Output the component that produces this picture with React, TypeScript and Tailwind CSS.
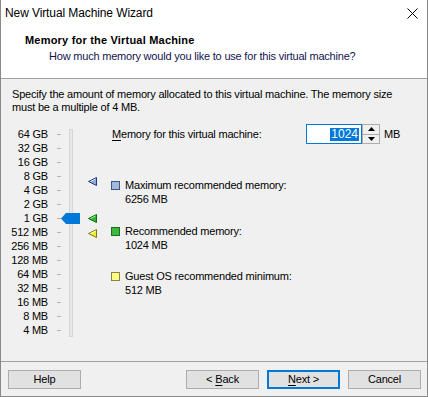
import React from "react";

const labels = [
  "64 GB", "32 GB", "16 GB", "8 GB", "4 GB", "2 GB", "1 GB",
  "512 MB", "256 MB", "128 MB", "64 MB", "32 MB", "16 MB", "8 MB", "4 MB",
];

function Tri({ fill, stroke, light }: { fill: string; stroke: string; light: string }) {
  return (
    <svg width="9" height="9" viewBox="0 0 9 9">
      <polygon points="0.5,4.5 8.5,0.5 8.5,8.5" fill={fill} stroke={stroke} strokeWidth="1" />
      <polyline points="2.5,4.5 7.5,2" fill="none" stroke={light} strokeWidth="1" />
    </svg>
  );
}

function Square({ fill, border }: { fill: string; border: string }) {
  return (
    <div
      className="w-[9px] h-[9px] border shrink-0"
      style={{ backgroundColor: fill, borderColor: border }}
    />
  );
}

function Btn({ children, primary }: { children: React.ReactNode; primary?: boolean }) {
  return (
    <div
      className={
        "w-[73px] h-[19px] flex items-center justify-center bg-[#e1e1e1] leading-none text-black " +
        (primary ? "border-2 border-[#0078d7]" : "border border-[#adadad]")
      }
    >
      {children}
    </div>
  );
}

export default function App() {
  return (
    <div className="w-[428px] h-[397px] flex flex-col border-x border-b border-[#8a8a8a] bg-[#f0f0f0] font-['Liberation_Sans',Arial,sans-serif] text-[11px] tracking-[-0.2px] text-black overflow-hidden">
      {/* Header (title bar + wizard header) */}
      <div className="bg-white border-b border-[#a0a0a0]">
        <div className="h-[26px] flex items-center justify-between pl-[4px] pr-[9px] text-[12px] tracking-[-0.1px]">
          <span className="leading-[16px]">New Virtual Machine Wizard</span>
          <svg width="11" height="11" viewBox="0 0 11 11" className="mt-[1px]">
            <path d="M0.5 0.5 L10.5 10.5 M10.5 0.5 L0.5 10.5" stroke="#000" strokeWidth="1" />
          </svg>
        </div>
        <div className="pt-[6px] pb-[14px]">
          <div className="pl-[24px] leading-[16px] font-bold tracking-[0.2px]">Memory for the Virtual Machine</div>
          <div className="pl-[48px] leading-[16px] text-[#141450]">
            How much memory would you like to use for this virtual machine?
          </div>
        </div>
      </div>

      {/* Body */}
      <div className="flex-1 flex flex-col">
        <div className="pl-[11px] pt-[9px] leading-[13px]">
          <div className="whitespace-nowrap">
            Specify the amount of memory allocated to this virtual machine. The memory size
          </div>
          <div className="whitespace-nowrap">must be a multiple of 4 MB.</div>
        </div>

        <div className="mt-[10px] flex items-start">
          {/* Slider */}
          <div className="relative w-[110px] pt-[3px] shrink-0">
            <div className="flex flex-col">
              {labels.map((l) => (
                <div key={l} className="h-[14px] flex items-center">
                  <span className="w-[47px] text-right leading-[14px] whitespace-nowrap">{l}</span>
                  <span className="ml-[9px] w-[4px] h-px bg-[#b4b4b4]" />
                </div>
              ))}
            </div>
            <div className="absolute left-[68px] top-[5px] w-[4px] h-[208px] bg-[#e7e7e7] border border-[#d6d6d6]" />
            <svg className="absolute left-[60px] top-[89px]" width="19" height="11" viewBox="0 0 19 11">
              <polygon points="0,5.5 5,0 19,0 19,11 5,11" fill="#0078d7" />
            </svg>
            <div className="absolute left-[87px] top-[53px] leading-none">
              <Tri fill="#8fa9d6" stroke="#1f3b7a" light="#dbe6f6" />
            </div>
            <div className="absolute left-[87px] top-[90px] leading-none">
              <Tri fill="#2fb82f" stroke="#0f6a0f" light="#a6eaa6" />
            </div>
            <div className="absolute left-[87px] top-[105px] leading-none">
              <Tri fill="#eeee30" stroke="#7b7b10" light="#ffffc0" />
            </div>
          </div>

          {/* Right column */}
          <div className="flex flex-col">
            <div className="h-[20px] flex items-center">
              <span className="w-[195px] pl-[1px] leading-[14px]">
                <span className="underline underline-offset-2">M</span>emory for this virtual machine:
              </span>
              <div className="w-[56px] h-[20px] bg-white border border-[#0078d7] flex items-center justify-end pr-[2px]">
                <span className="bg-[#0078d7] text-white text-[12px] tracking-normal leading-[13px] px-[1px]">1024</span>
              </div>
              <div className="w-[18px] h-[20px] border border-[#adadad] flex flex-col bg-[#f0f0f0]">
                <div className="flex-1 flex items-center justify-center border-b border-[#adadad]">
                  <svg width="7" height="4" viewBox="0 0 7 4">
                    <polygon points="3.5,0 7,4 0,4" fill="#000" />
                  </svg>
                </div>
                <div className="flex-1 flex items-center justify-center">
                  <svg width="7" height="4" viewBox="0 0 7 4">
                    <polygon points="0,0 7,0 3.5,4" fill="#000" />
                  </svg>
                </div>
              </div>
              <span className="ml-[4px] leading-[14px]">MB</span>
            </div>

            <div className="mt-[34px] flex flex-col">
              <div className="h-[14px] flex items-center gap-[5px]">
                <Square fill="#a4b9dc" border="#3d5888" />
                <span className="leading-[14px]">Maximum recommended memory:</span>
              </div>
              <div className="pl-[14px] leading-[14px]">6256 MB</div>
            </div>

            <div className="mt-[18px] flex flex-col">
              <div className="h-[14px] flex items-center gap-[5px]">
                <Square fill="#3cb83c" border="#1b6e1b" />
                <span className="leading-[14px]">Recommended memory:</span>
              </div>
              <div className="pl-[14px] leading-[14px]">1024 MB</div>
            </div>

            <div className="mt-[17px] flex flex-col">
              <div className="h-[14px] flex items-center gap-[5px]">
                <Square fill="#ffff80" border="#858548" />
                <span className="leading-[14px]">Guest OS recommended minimum:</span>
              </div>
              <div className="pl-[14px] leading-[14px]">512 MB</div>
            </div>
          </div>
        </div>
      </div>

      {/* Footer */}
      <div className="h-[35px] border-t border-[#a0a0a0] pt-[8px] pl-[7px] pr-[6px] flex items-start">
        <Btn>Help</Btn>
        <div className="flex-1" />
        <div className="flex gap-[8px]">
          <Btn>
            &lt; <span className="underline underline-offset-2 ml-[3px]">B</span>ack
          </Btn>
          <Btn primary>
            <span className="underline underline-offset-2">N</span>ext &gt;
          </Btn>
          <Btn>Cancel</Btn>
        </div>
      </div>
    </div>
  );
}
